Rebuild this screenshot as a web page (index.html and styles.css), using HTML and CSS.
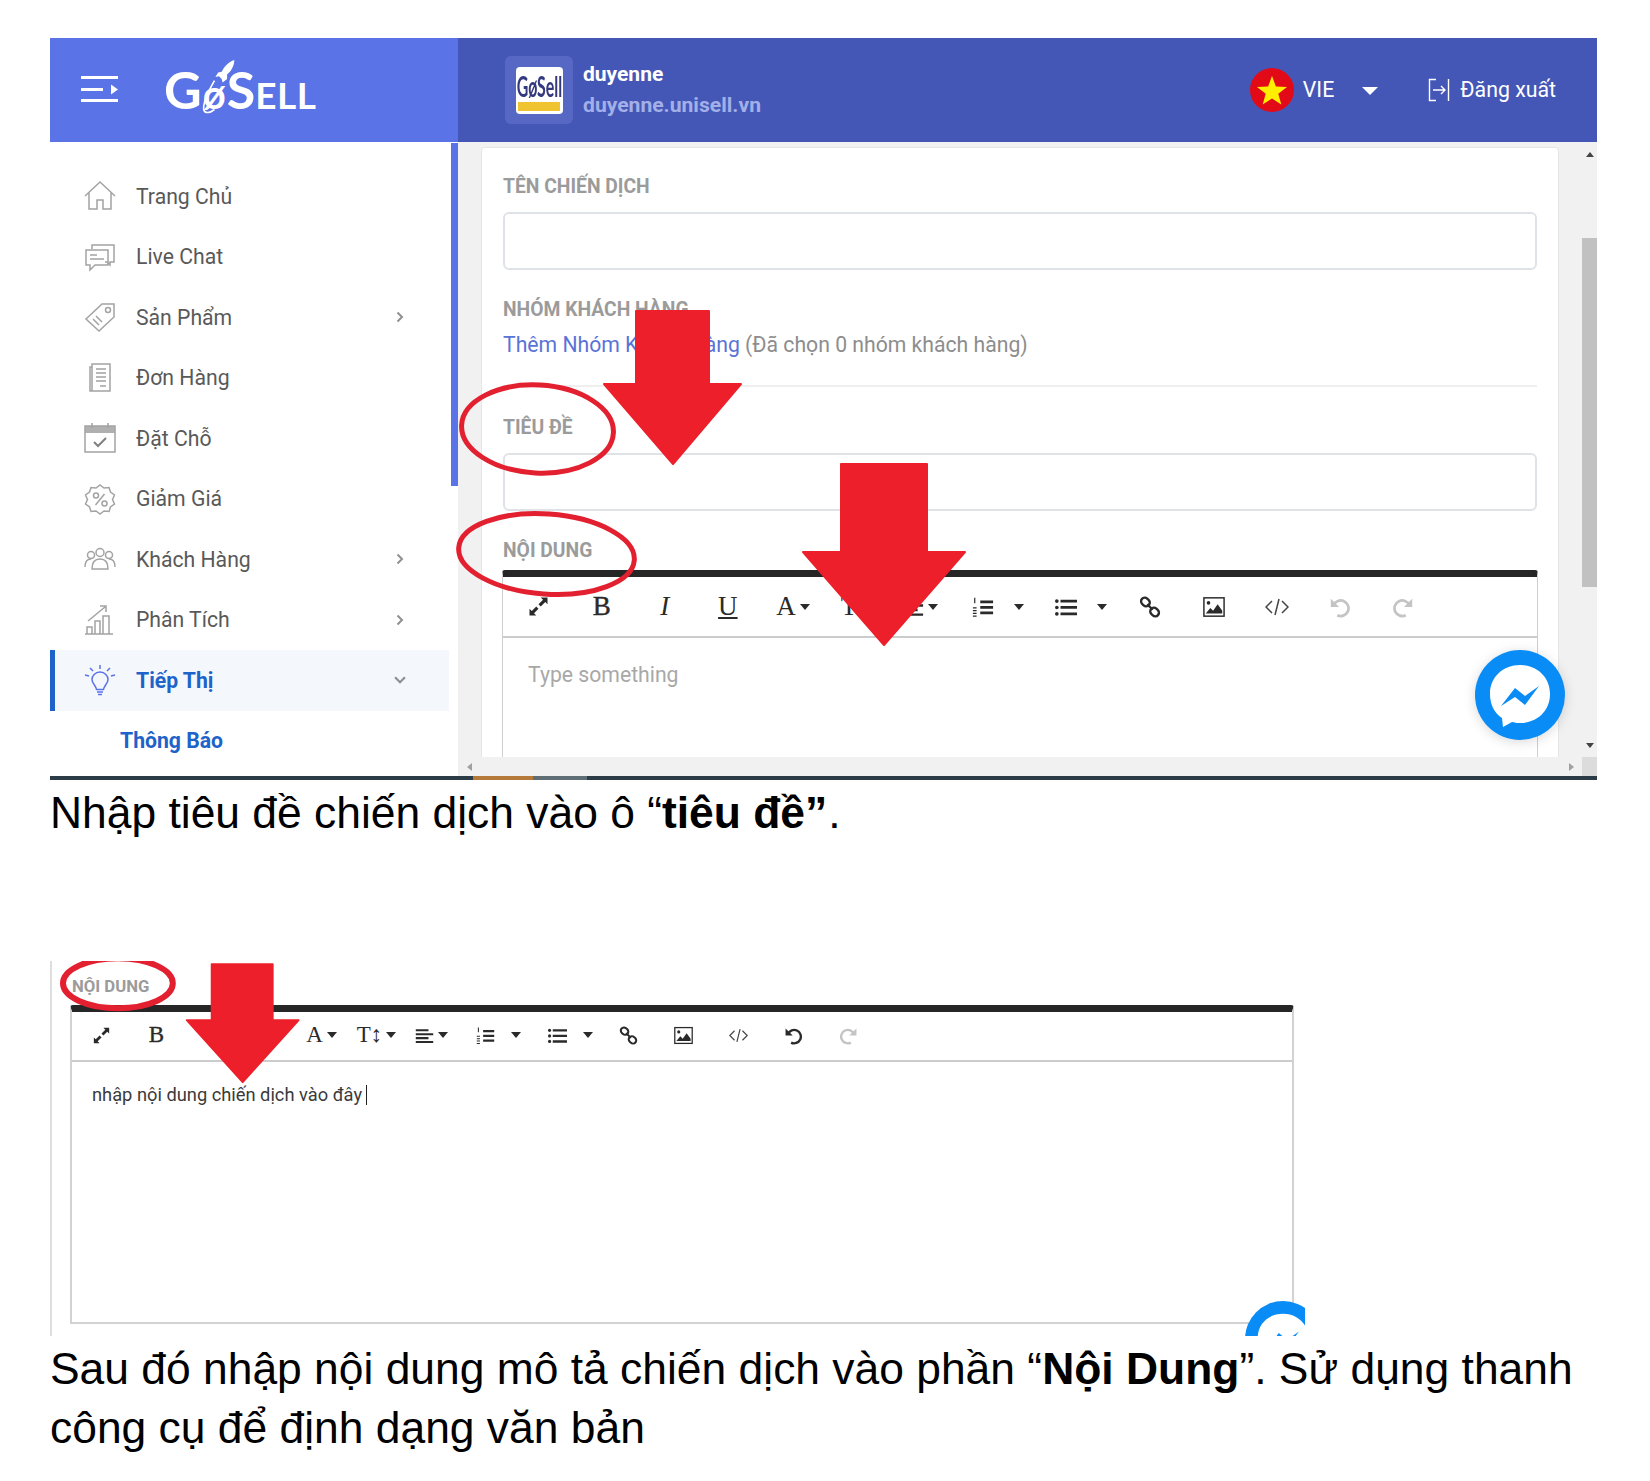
FILE: index.html
```html
<!DOCTYPE html>
<html lang="vi">
<head>
<meta charset="utf-8">
<title>GoSell</title>
<link rel="stylesheet" href="styles.css">
</head>
<body>
<svg class="defs" width="0" height="0" aria-hidden="true">
  <symbol id="i-expand" viewBox="0 0 24 24"><path d="M14 4h6v6l-2-2-4 4-2-2 4-4zM10 20H4v-6l2 2 4-4 2 2-4 4z" fill="currentColor"/></symbol>
  <symbol id="i-ol" viewBox="0 0 24 24"><path d="M9 5h14v3H9zM9 11h14v3H9zM9 17h14v3H9z" fill="currentColor"/><path d="M3 2v6M1 13h4M1 16h4M1 19h4M1 22h4" stroke="currentColor" stroke-width="1.3" fill="none"/></symbol>
  <symbol id="i-ul" viewBox="0 0 24 24"><path d="M6 4h18v3H6zM6 11h18v3H6zM6 18h18v3H6z" fill="currentColor"/><circle cx="2" cy="5.5" r="2" fill="currentColor"/><circle cx="2" cy="12.5" r="2" fill="currentColor"/><circle cx="2" cy="19.5" r="2" fill="currentColor"/></symbol>
  <symbol id="i-align" viewBox="0 0 24 24"><path d="M1 4h16v2.6H1zM1 9h22v2.6H1zM1 14h16v2.6H1zM1 19h22v2.6H1z" fill="currentColor"/></symbol>
  <symbol id="i-link" viewBox="0 0 24 24"><g fill="none" stroke="currentColor" stroke-width="2.6"><rect x="2" y="2.5" width="10" height="8" rx="4" transform="rotate(42 7 6.5)"/><rect x="12" y="13.5" width="10" height="8" rx="4" transform="rotate(42 17 17.5)"/><path d="M9 9l6 6"/></g></symbol>
  <symbol id="i-image" viewBox="0 0 24 22"><rect x="1" y="1" width="22" height="20" fill="none" stroke="currentColor" stroke-width="1.6"/><circle cx="6" cy="6.5" r="2" fill="currentColor"/><path d="M3 18l5-6 3 3 5-7 5 7v3z" fill="currentColor"/></symbol>
  <symbol id="i-code" viewBox="0 0 24 20"><path d="M7 4l-6 6 6 6M17 4l6 6-6 6M14 2l-4 16" fill="none" stroke="currentColor" stroke-width="1.5"/></symbol>
  <symbol id="i-undo" viewBox="0 0 24 24"><path d="M5 10A8.5 8.5 0 1 1 9 21" fill="none" stroke="currentColor" stroke-width="3"/><path d="M2 3v9h9z" fill="currentColor"/></symbol>
  <symbol id="i-redo" viewBox="0 0 24 24"><path d="M19 10A8.5 8.5 0 1 0 15 21" fill="none" stroke="currentColor" stroke-width="3"/><path d="M22 3v9h-9z" fill="currentColor"/></symbol>
  <symbol id="i-chev" viewBox="0 0 10 12"><path d="M2.5 1.5L7 6l-4.5 4.5" fill="none" stroke="currentColor" stroke-width="2"/></symbol>
</svg>

<figure class="shot shot-main">
  <header class="topbar">
    <div class="brandbar">
      <svg class="burger" viewBox="0 0 37 26"><path d="M0 1.5h37M0 13.5h22M0 24.5h37" stroke="#fff" stroke-width="3"/><path d="M30 8.5l7 5-7 5z" fill="#fff"/></svg>
      <div class="logo">
        <span>G</span><span class="logo-o">ø</span><span>S</span><span class="logo-ell">ELL</span>
        <svg class="rocket" viewBox="0 0 40 62"><path d="M37 1c-6 2-11 7-14 13l-4 1-3 5 4-1 3 3 1 4 5-4v-5c5-4 8-10 8-16z" fill="#fff"/><path d="M15 24C8 36 2 48 3 56c1 5 7 4 12 0" fill="none" stroke="#fff" stroke-width="1.8"/></svg>
      </div>
    </div>
    <div class="accountbar">
      <div class="store">
        <div class="store-thumb">
          <div class="store-logo"><span class="store-name">GøSell</span><span class="store-strip"></span></div>
        </div>
        <div class="store-text">
          <div class="store-title">duyenne</div>
          <div class="store-url">duyenne.unisell.vn</div>
        </div>
      </div>
      <div class="account-actions">
        <svg class="flag" viewBox="0 0 44 44"><circle cx="22" cy="22" r="22" fill="#e30a17"/><path d="M22 8l3.9 10.4 11.1.5-8.700 6.900 3 10.700L22 30.400l-9.300 6.100 3-10.700L7 18.900l11.100-.5z" fill="#ffee00"/></svg>
        <span class="lang">VIE</span>
        <span class="lang-caret"></span>
        <svg class="logout" viewBox="0 0 22 24"><path d="M8 1.500H1.500v21H8M5 12h12M13 8l4 4-4 4M20.500 1v22" fill="none" stroke="#fff" stroke-width="1.400"/></svg>
        <span class="logout-text">Đăng xuất</span>
      </div>
    </div>
  </header>

  <div class="workspace">
    <aside class="sidebar">
      <nav class="menu">
        <a class="menu-item">
          <svg class="menu-icon" viewBox="0 0 32 32"><path d="M1 16L16 2l15 14M5 13v16h8v-9h6v9h8V13" /></svg>
          <span>Trang Chủ</span>
        </a>
        <a class="menu-item">
          <svg class="menu-icon" viewBox="0 0 32 32"><path d="M8 8V4h22v17h-4v3l-3-3h-2"/><path d="M2 9h22v15H11l-5 5v-5H2zM6 14h7M6 18h14"/></svg>
          <span>Live Chat</span>
        </a>
        <a class="menu-item">
          <svg class="menu-icon" viewBox="0 0 32 32"><path d="M18 3h12v13L15 30 2 18zM9 18l6 6M12 15l6 6"/><circle cx="24" cy="9" r="2.500"/></svg>
          <span>Sản Phẩm</span>
          <svg class="chev"><use href="#i-chev"/></svg>
        </a>
        <a class="menu-item">
          <svg class="menu-icon" viewBox="0 0 32 32"><path d="M8 29H6V5h2M8 2h18v27H8zM12 7h10M12 11h10M12 15h10M12 19h10M16 24h6"/></svg>
          <span>Đơn Hàng</span>
        </a>
        <a class="menu-item">
          <svg class="menu-icon" viewBox="0 0 32 32"><path class="menu-fill" d="M1 4h30v7H1z"/><path d="M1 4h30v26H1zM8 1v5M24 1v5"/><path class="menu-check" d="M10 20l4 4 8-8"/></svg>
          <span>Đặt Chỗ</span>
        </a>
        <a class="menu-item">
          <svg class="menu-icon" viewBox="0 0 32 32"><path d="M16 2l4 3 5-.500 1.500 4.500 4 3-2 4.500 2 4.500-4 3L25 28.500l-5-.500-4 3-4-3-5 .500L5.500 24l-4-3 2-4.500-2-4.500 4-3L7 4.500l5 .500zM20.500 11l-9 11"/><circle cx="12" cy="12.500" r="2.500"/><circle cx="20.500" cy="20.500" r="2.500"/></svg>
          <span>Giảm Giá</span>
        </a>
        <a class="menu-item">
          <svg class="menu-icon" viewBox="0 0 32 32"><circle cx="7" cy="12" r="3.500"/><circle cx="16" cy="9.500" r="4"/><circle cx="25" cy="12" r="3.500"/><path d="M1 24c0-6 3-8 6-8M31 24c0-6-3-8-6-8M8 26c0-7 3-10 8-10s8 3 8 10z"/></svg>
          <span>Khách Hàng</span>
          <svg class="chev"><use href="#i-chev"/></svg>
        </a>
        <a class="menu-item">
          <svg class="menu-icon" viewBox="0 0 32 32"><path d="M1 30h28M3 30v-7h5v7M11 30V17h5v13M19 30V12h6v18M4 17L21 3M16 2h6v6"/></svg>
          <span>Phân Tích</span>
          <svg class="chev"><use href="#i-chev"/></svg>
        </a>
        <a class="menu-item is-active">
          <svg class="menu-icon" viewBox="0 0 32 32"><path d="M16 8c-5 0-8 4-8 7.500 0 4 4 6 4.500 10h7c.500-4 4.500-6 4.500-10C24 12 21 8 16 8zM13 28h6M14 30.500h4M16 1v4M6 4l3 3M26 4l-3 3M1 11l4 1M31 11l-4 1"/></svg>
          <span>Tiếp Thị</span>
          <svg class="chev chev-down"><use href="#i-chev"/></svg>
        </a>
        <a class="menu-item is-sub">Thông Báo</a>
      </nav>
      <div class="side-scroll"><div class="side-thumb"></div></div>
    </aside>

    <main class="content">
      <div class="viewport">
        <section class="card">
          <label class="field-label">TÊN CHIẾN DỊCH</label>
          <div class="input input-name"></div>
          <label class="field-label label-group">NHÓM KHÁCH HÀNG</label>
          <p class="group-line"><a class="link">Thêm Nhóm Khách Hàng</a> (Đã chọn 0 nhóm khách hàng)</p>
          <hr class="divider">
          <label class="field-label">TIÊU ĐỀ</label>
          <div class="input input-title"></div>
          <label class="field-label label-content">NỘI DUNG</label>
          <div class="editor editor-main">
            <div class="toolbar">
              <span class="tool"><svg class="ti ti-expand"><use href="#i-expand"/></svg></span>
              <span class="tool serif"><b>B</b></span>
              <span class="tool serif"><i>I</i></span>
              <span class="tool serif"><u>U</u></span>
              <span class="tool serif tool-shift">A<em class="caret"></em></span>
              <span class="tool serif tool-shift">T<em class="caret"></em></span>
              <span class="tool tool-wide"><svg class="ti"><use href="#i-align"/></svg><em class="caret"></em></span>
              <span class="tool tool-list"><svg class="ti"><use href="#i-ol"/></svg><em class="caret caret-far"></em></span>
              <span class="tool tool-list tool-list-ul"><svg class="ti"><use href="#i-ul"/></svg><em class="caret caret-far"></em></span>
              <span class="tool tool-link"><svg class="ti"><use href="#i-link"/></svg></span>
              <span class="tool"><svg class="ti"><use href="#i-image"/></svg></span>
              <span class="tool"><svg class="ti ti-thin"><use href="#i-code"/></svg></span>
              <span class="tool off"><svg class="ti"><use href="#i-undo"/></svg></span>
              <span class="tool off"><svg class="ti"><use href="#i-redo"/></svg></span>
            </div>
            <div class="editor-body placeholder">Type something</div>
          </div>
        </section>
        <div class="v-scroll">
          <span class="arrow-up"></span>
          <div class="v-thumb"></div>
          <span class="arrow-down"></span>
        </div>
      </div>
      <div class="h-scroll">
        <span class="arrow-left"></span>
        <span class="arrow-right"></span>
        <span class="corner"></span>
      </div>
    </main>
  </div>
  <div class="taskline"><span class="seg-a"></span><span class="seg-b"></span><span class="seg-c"></span><span class="seg-d"></span></div>

  <svg class="messenger messenger-main" viewBox="0 0 90 90"><circle cx="45" cy="45" r="45" fill="#0a8cf7"/><path d="M45 15c17 0 30 12 30 29S62 73 45 73c-3 0-6-.500-8-1l-9 5-1-9C19 63 15 54 15 44c0-17 13-29 30-29z" fill="#fff"/><path d="M26 56l14-18 10 8 14-10-14 19-10-8z" fill="#0a8cf7"/></svg>

  <svg class="marks" viewBox="0 0 1547 742">
    <ellipse class="ring" cx="487.500" cy="391" rx="76" ry="44" transform="rotate(3 487.500 391)"/>
    <ellipse class="ring" cx="496.500" cy="516" rx="88" ry="40" transform="rotate(4 496.500 516)"/>
    <path class="arrow" d="M586 273h73v73h32l-68 80-69-80h32z"/>
    <path class="arrow" d="M791 426h86v88h38l-81 93-81-93h38z"/>
  </svg>
</figure>

<p class="caption">Nhập tiêu đề chiến dịch vào ô “<b>tiêu đề”</b><span class="full-stop">.</span></p>

<figure class="shot shot-second">
  <label class="field-label label-second">NỘI DUNG</label>
  <div class="editor editor-second">
    <div class="toolbar">
      <span class="tool"><svg class="ti ti-expand"><use href="#i-expand"/></svg></span>
      <span class="tool serif"><b>B</b></span>
      <span class="tool serif"><i>I</i></span>
      <span class="tool serif"><u>U</u></span>
      <span class="tool serif">A<em class="caret"></em></span>
      <span class="tool serif">T↕<em class="caret"></em></span>
      <span class="tool"><svg class="ti"><use href="#i-align"/></svg><em class="caret"></em></span>
      <span class="tool tool-list"><svg class="ti"><use href="#i-ol"/></svg><em class="caret caret-far"></em></span>
      <span class="tool tool-list tool-list-ul"><svg class="ti"><use href="#i-ul"/></svg><em class="caret caret-far"></em></span>
      <span class="tool"><svg class="ti"><use href="#i-link"/></svg></span>
      <span class="tool"><svg class="ti"><use href="#i-image"/></svg></span>
      <span class="tool"><svg class="ti ti-thin"><use href="#i-code"/></svg></span>
      <span class="tool"><svg class="ti"><use href="#i-undo"/></svg></span>
      <span class="tool off"><svg class="ti"><use href="#i-redo"/></svg></span>
    </div>
    <div class="editor-body typed">nhập nội dung chiến dịch vào đây<span class="cursor"></span></div>
  </div>
  <svg class="messenger messenger-second" viewBox="0 0 90 90"><circle cx="45" cy="45" r="45" fill="#0a8cf7"/><path d="M45 15c17 0 30 12 30 29S62 73 45 73c-3 0-6-.500-8-1l-9 5-1-9C19 63 15 54 15 44c0-17 13-29 30-29z" fill="#fff"/><path d="M26 56l14-18 10 8 14-10-14 19-10-8z" fill="#0a8cf7"/></svg>
  <svg class="marks" viewBox="0 0 1255 375">
    <ellipse class="ring ring-thick" cx="66" cy="22" rx="55" ry="25"/>
    <path class="arrow" d="M160 3h61v56h26l-56 62-56-62h25z"/>
  </svg>
</figure>

<p class="caption caption-last">Sau đó nhập nội dung mô tả chiến dịch vào phần “<b>Nội Dung</b>”. Sử dụng thanh công cụ để định dạng văn bản</p>
</body>
</html>
```
FILE: styles.css
```css
* { box-sizing: border-box; }
html, body { margin: 0; background: #fff; }
body { padding: 38px 53px 0 50px; font-family: "Liberation Sans", Arial, sans-serif; color: #000; }
.defs { position: absolute; }
figure { margin: 0; }

.shot { position: relative; overflow: hidden; }
.shot-main { height: 742px; font-family: Roboto, sans-serif; }

/* header */
.topbar { display: flex; height: 104px; color: #fff; }
.brandbar { width: 408px; background: #5a73e7; display: flex; align-items: center; padding-left: 31px; }
.burger { width: 37px; height: 26px; margin-top: -2px; }
.logo { position: relative; margin-left: 46px; margin-top: 4px; font-family: "Lato", sans-serif; font-weight: 700; font-size: 52px; line-height: 60px; display: flex; align-items: baseline; }
.logo-o { font-size: 40px; margin: 0 1px; }
.logo-ell { font-size: 37px; letter-spacing: .5px; }
.rocket { position: absolute; left: 37px; top: 0; width: 36px; height: 56px; }
.accountbar { flex: 1; background: #4457b7; display: flex; align-items: center; justify-content: space-between; padding: 0 41px 0 47px; }
.store { display: flex; align-items: center; gap: 10px; }
.store-thumb { width: 68px; height: 68px; background: #5668c3; border-radius: 6px; display: flex; align-items: center; justify-content: center; }
.store-logo { width: 47px; height: 47px; background: #fff; border-radius: 4px; display: flex; flex-direction: column; align-items: center; justify-content: center; overflow: hidden; }
.store-name { font-family: "Lato", sans-serif; font-weight: 700; font-size: 29px; line-height: 31px; color: #34397f; transform: scaleX(.55); white-space: nowrap; }
.store-strip { width: 42px; height: 9px; flex: none; background: #f0c331; margin-top: 1px; }
.store-text { display: flex; flex-direction: column; gap: 9px; margin-top: -2px; }
.store-title { font-size: 21px; line-height: 22px; font-weight: 700; color: #fff; }
.store-url { font-size: 21.1px; line-height: 22px; font-weight: 700; color: #a3b0e8; }
.account-actions { display: flex; align-items: center; margin-top: -1px; }
.flag { width: 44px; height: 44px; margin-right: 9px; }
.lang { font-size: 21.3px; font-weight: 400; }
.lang-caret { width: 0; height: 0; border: 8px solid transparent; border-top: 8px solid #fff; border-bottom: 0; margin: 2px 50px 0 28px; }
.logout { width: 22px; height: 24px; margin-right: 10px; }
.logout-text { font-size: 21.3px; font-weight: 400; }

/* sidebar */
.workspace { display: flex; height: 634px; }
.sidebar { width: 408px; display: flex; background: #fff; overflow: hidden; }
.menu { width: 399px; padding-top: 24px; margin-right: 2px; }
.menu-item { display: flex; align-items: center; height: 60.5px; padding-left: 34px; font-size: 21.2px; color: #595959; gap: 20px; }
.menu-icon { width: 32px; height: 32px; flex: none; fill: none; stroke: #a3a3a3; stroke-width: 1.500; }
.menu-fill { fill: #b0b0b0; stroke: none; }
.menu-check { stroke: #808080; stroke-width: 2; }
.chev { width: 10px; height: 12px; margin-left: auto; margin-right: 44px; color: #909090; }
.chev-down { transform: rotate(90deg) scale(1.100); }
.is-active { background: #f4f7fc; border-left: 5px solid #1e63c9; padding-left: 29px; color: #1e63c9; font-weight: 700; }
.is-active .menu-icon { stroke: #5a73e7; }
.is-sub { padding-left: 70px; color: #1e63c9; font-weight: 700; }
.side-scroll { width: 7px; height: 100%; background: #fff; }
.side-thumb { height: 343px; margin-top: 1px; background: #5a73e7; }

/* main */
.content { flex: 1; display: flex; flex-direction: column; background: #f1f1f1; min-width: 0; }
.viewport { flex: 1; display: flex; overflow: hidden; min-height: 0; }
.card { width: 1078px; margin: 5px 23px 0; padding: 27px 21px 0; background: #fff; border: 1px solid #e6e6e6; border-bottom: 0; border-radius: 4px 4px 0 0; }
.field-label { display: block; font-size: 19.3px; line-height: 24px; font-weight: 700; color: #9b9b9b; }
.input { border: 2px solid #dfe2e6; border-radius: 6px; background: #fff; }
.input-name { height: 58px; margin-top: 13px; }
.label-group { margin-top: 28px; }
.group-line { margin: 9px 0 0; font-size: 21.2px; line-height: 28px; color: #8d8d8d; }
.link { color: #5a73d7; }
.divider { border: 0; border-top: 2px solid #efefef; margin: 26px 0 29px; }
.input-title { height: 58px; margin-top: 13px; }
.label-content { margin-top: 28px; }

.editor { border: 1px solid #cfcfcf; border-top: 7px solid #262626; border-radius: 3px 3px 0 0; background: #fff; }
.editor-main { margin: 7px -1px 0; height: 300px; border-bottom: 0; }
.toolbar { display: flex; align-items: center; color: #2a2a2a; border-bottom: 2px solid #cccccc; }
.tool { display: flex; align-items: center; justify-content: center; flex: none; position: relative; }
.serif { font-family: "Liberation Serif", serif; }
.tool b, .tool i, .tool u { font-style: normal; font-weight: 400; }
.tool b { -webkit-text-stroke: .4px currentColor; }
.tool i { font-style: italic; }
.caret { display: inline-block; width: 0; height: 0; border: 5px solid transparent; border-top: 6px solid #2a2a2a; border-bottom: 0; margin-left: 4px; }
.off { color: #c4c4c4; }
.editor-main .toolbar { height: 61px; padding-left: 4px; }
.editor-main .tool { width: 63.100px; font-size: 27px; }
.editor-main .ti { width: 22px; height: 22px; }
.editor-main .ti-expand { width: 27px; height: 27px; }
.editor-main .tool-shift { padding-left: 4px; }
.editor-main .tool-wide { width: 68px; }
.editor-main .tool-list { width: 83px; justify-content: flex-start; padding-left: 18px; }
.editor-main .tool-list-ul { width: 81px; }
.editor-main .tool-link { width: 65px; }
.editor-main .caret-far { margin-left: 20px; }
.editor-main .ti-thin { width: 24px; }
.ti { color: inherit; }
.ti-thin { color: #444; }
.editor-body { font-size: 21.2px; line-height: 28px; }
.editor-main .editor-body { padding: 23px 25px 0; }
.placeholder { color: #a8a8a8; }

.v-scroll { flex: none; width: 15px; margin-left: 0; display: flex; flex-direction: column; align-items: center; position: relative; }
.v-thumb { width: 15px; height: 349px; background: #c1c1c1; margin-top: 96px; }
.arrow-up, .arrow-down { position: absolute; width: 0; height: 0; border: 4px solid transparent; }
.arrow-up { top: 10px; border-bottom: 5px solid #444; border-top: 0; }
.arrow-down { bottom: 9px; border-top: 5px solid #444; border-bottom: 0; }
.h-scroll { height: 19px; flex: none; display: flex; align-items: center; position: relative; }
.arrow-left, .arrow-right { position: absolute; width: 0; height: 0; border: 4px solid transparent; }
.arrow-left { left: 9px; border-right: 5px solid #a0a0a0; border-left: 0; }
.arrow-right { right: 23px; border-left: 5px solid #a0a0a0; border-right: 0; }
.corner { position: absolute; right: 0; top: 0; width: 15px; height: 19px; background: #dcdcdc; }

.taskline { display: flex; height: 4px; background: #2b3c47; }
.seg-a { width: 423px; }
.seg-b { width: 60px; background: #b5793a; }
.seg-c { width: 54px; background: #5f6d75; }
.seg-d { flex: 1; }

.messenger { position: absolute; display: block; }
.messenger-main { left: 1425px; top: 612px; width: 90px; height: 90px; filter: drop-shadow(0 2px 6px rgba(0,0,0,.15)); }
.messenger-second { left: 1193px; top: 340px; width: 76px; height: 76px; }
.marks { position: absolute; left: 0; top: 0; width: 100%; height: 100%; pointer-events: none; }
.ring { fill: none; stroke: #e2202f; stroke-width: 5; }
.ring-thick { stroke-width: 6; }
.arrow { fill: #ed1f2a; stroke: #ed1f2a; stroke-width: 2; stroke-linejoin: round; }

.caption { margin: 0; padding-top: 3px; font-size: 44.4px; line-height: 59px; }
.caption-last { width: 1540px; }
.full-stop { margin-left: 1px; }

/* second screenshot */
.shot-second { width: 1255px; height: 375px; margin-top: 119px; border-left: 2px solid #dedede; padding: 14px 0 0 18px; font-family: Roboto, sans-serif; }
.label-second { font-size: 16.7px; line-height: 24px; margin-left: 2px; }
.editor-second { width: 1224px; height: 319px; margin-top: 6px; border-width: 7px 2px 2px 2px; border-color: #262626 #d2d2d2 #d2d2d2 #d2d2d2; }
.editor-second .toolbar { height: 50px; padding: 0 0 2px 2px; }
.editor-second .tool { width: 55px; font-size: 23px; }
.editor-second .ti { width: 19px; height: 19px; }
.editor-second .ti-expand { width: 23px; height: 23px; }
.editor-second .tool-list { width: 72px; justify-content: flex-start; padding-left: 17px; }
.editor-second .tool-list-ul { width: 70px; }
.editor-second .caret-far { margin-left: 16px; }
.typed { padding: 19px 20px 0; font-size: 18.3px; line-height: 28px; color: #3a3a3a; }
.cursor { display: inline-block; width: 1px; height: 20px; background: #222; margin-left: 4px; vertical-align: -4px; }
```
